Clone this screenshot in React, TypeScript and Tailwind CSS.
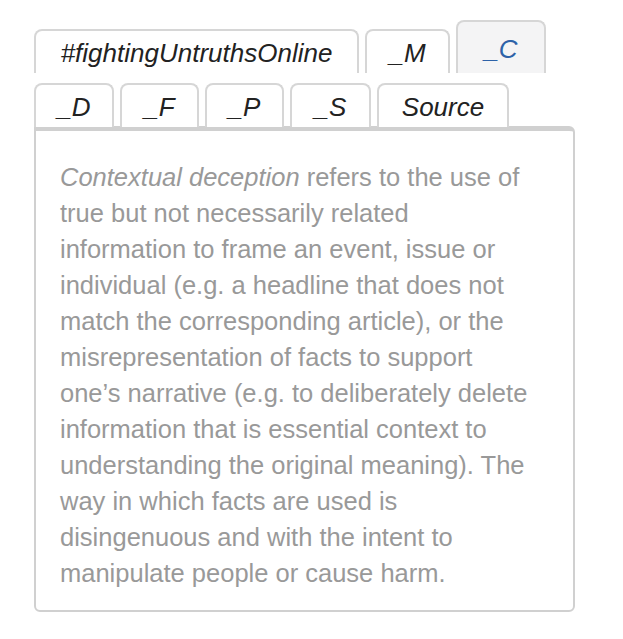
const font = { fontFamily: '"Liberation Sans", Arial, sans-serif' }

type Tab = { label: string; w: string; active?: boolean }

const rowOne: Tab[] = [
  { label: '#fightingUntruthsOnline', w: 'w-[325px]' },
  { label: '_M', w: 'w-[85px]' },
  { label: '_C', w: 'w-[90px]', active: true },
]

const rowTwo: Tab[] = [
  { label: '_D', w: 'w-[80px]' },
  { label: '_F', w: 'w-[79px]' },
  { label: '_P', w: 'w-[79px]' },
  { label: '_S', w: 'w-[81px]' },
  { label: 'Source', w: 'w-[132px]' },
]

// line breaks follow the original wrapping
const lines = [
  'true but not necessarily related',
  'information to frame an event, issue or',
  'individual (e.g. a headline that does not',
  'match the corresponding article), or the',
  'misrepresentation of facts to support',
  'one’s narrative (e.g. to deliberately delete',
  'information that is essential context to',
  'understanding the original meaning). The',
  'way in which facts are used is',
  'disingenuous and with the intent to',
  'manipulate people or cause harm.',
]

function TabButton({ tab }: { tab: Tab }) {
  return (
    <button
      className={`${tab.w} ${tab.active ? 'h-[53px] bg-[#f4f4f5] text-[#2d62a8] pt-[4px]' : 'h-[44px] bg-white text-[#222] pt-[3px]'} flex items-center justify-center border-2 border-b-0 border-[#d6d6d6] rounded-t-[8px] text-[26px] italic`}
    >
      {tab.label}
    </button>
  )
}

export default function App() {
  return (
    <div className="min-h-screen bg-white pt-[20px] pl-[34px]" style={font}>
      <div className="flex items-end gap-[6px]">
        {rowOne.map(t => <TabButton key={t.label} tab={t} />)}
      </div>
      <div className="flex items-end gap-[6px] mt-[10px]">
        {rowTwo.map(t => <TabButton key={t.label} tab={t} />)}
      </div>
      <div className="w-[541px] border-2 border-t-[5px] border-[#d0d0d0] rounded-b-[6px] rounded-tr-[6px] pl-[24px] pr-[10px] pt-[28px] pb-[19px] -mt-[1px]">
        <p className="text-[25.5px] leading-[36px] text-[#999] whitespace-nowrap">
          <span className="block"><em>Contextual deception</em> refers to the use of</span>
          {lines.map(l => <span key={l} className="block">{l}</span>)}
        </p>
      </div>
    </div>
  )
}
